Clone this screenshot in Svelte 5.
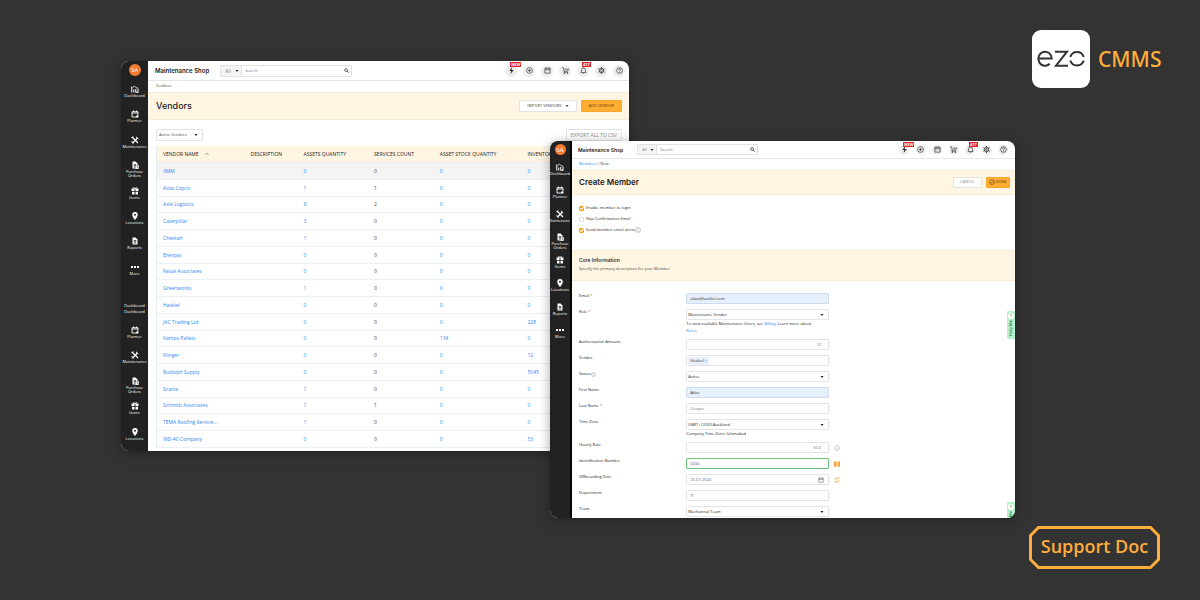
<script lang="ts">
	interface Field {
		id: string;
		label: string;
		kind?: 'select' | 'chip' | 'date';
		value: string;
		required?: boolean;
		info?: boolean;
		filled?: boolean;
		numeric?: boolean;
		valid?: boolean;
		side?: string;
	}

	const menu = [
		{ icon: 'dashboard', label: 'Dashboard' },
		{ icon: 'planner', label: 'Planner' },
		{ icon: 'tools', label: 'Maintenance' },
		{ icon: 'order', label: 'Purchase Orders' },
		{ icon: 'items', label: 'Items' },
		{ icon: 'pin', label: 'Locations' },
		{ icon: 'report', label: 'Reports' },
		{ icon: 'more', label: 'More' }
	];
	const actions = [
		{ icon: 'bolt', label: 'Updates', badge: 'NEW' },
		{ icon: 'plus', label: 'Add' },
		{ icon: 'calendar', label: 'Calendar' },
		{ icon: 'cart', label: 'Cart' },
		{ icon: 'bell', label: 'Alerts', badge: '417' },
		{ icon: 'gear', label: 'Settings' },
		{ icon: 'help', label: 'Help' }
	];

	const columns = ['Description', 'Assets Quantity', 'Services Count', 'Asset Stock Quantity', 'Inventory'];
	// name, assets, services, stock, inventory
	const vendors: [string, number, number, number, number][] = [
		['3MM', 0, 0, 0, 0],
		['Atlas Copco', 1, 1, 0, 0],
		['Axle Logistics', 9, 2, 0, 0],
		['Caterpillar', 3, 0, 0, 0],
		['Cheetah', 1, 0, 0, 0],
		['Enerpac', 0, 0, 0, 0],
		['Faisal Associates', 0, 0, 0, 0],
		['Greenworks', 1, 0, 0, 0],
		['Haskiel', 0, 0, 0, 0],
		['JAC Trading Ltd', 0, 0, 0, 228],
		['Kamps Pallets', 0, 0, 134, 0],
		['Klinger', 0, 0, 0, 12],
		['Rudolph Supply', 0, 0, 0, 5045],
		['Scania', 1, 0, 0, 0],
		['Schmidt Associates', 1, 1, 0, 0],
		['TEMA Roofing Service...', 1, 0, 0, 0],
		['WD-40 Company', 0, 0, 0, 53]
	];

	const fields: Field[] = [
		{ id: 'email', label: 'Email', value: 'atlas@hasklel.com', required: true, filled: true },
		{ id: 'role', label: 'Role', kind: 'select', value: 'Maintenance Vendor', required: true },
		{ id: 'amount', label: 'Authorization Amount', value: '10', numeric: true },
		{ id: 'vendor', label: 'Vendor', kind: 'chip', value: 'Haskiel' },
		{ id: 'status', label: 'Status', kind: 'select', value: 'Active', info: true },
		{ id: 'first', label: 'First Name', value: 'Atlas', filled: true },
		{ id: 'last', label: 'Last Name', value: 'Cooper', required: true },
		{ id: 'zone', label: 'Time Zone', kind: 'select', value: '(GMT+12:00) Auckland' },
		{ id: 'rate', label: 'Hourly Rate', value: '50.0', numeric: true, side: 'info' },
		{ id: 'ident', label: 'Identification Number', value: '6434', valid: true, side: 'barcode' },
		{ id: 'offboard', label: 'Offboarding Date', kind: 'date', value: '25-07-2024', side: 'refresh' },
		{ id: 'dept', label: 'Department', value: 'IT' },
		{ id: 'team', label: 'Team', kind: 'select', value: 'Mechanical Team' }
	];
</script>

{#snippet icon(name: string)}
	<svg class="icon" viewBox="0 0 16 16" aria-hidden="true">
		{#if name === 'dashboard'}
			<path d="M1.500 3v12M5.500 15V9M9.500 15V8M14 15V8M9.500 14.500h5" stroke-width="2" /><path d="M3 5l4-3 3 3.500 5 1" />
		{:else if name === 'planner'}
			<path d="M2 3.500h12v7M2 3.500V14h8M2 6h12M5 1v3M11 1v3" stroke-width="1.800" /><circle class="solid" cx="12.500" cy="13" r="2.500" />
		{:else if name === 'tools'}
			<path d="M3 14L12.500 4.500M2 2l12 12" stroke-width="2.600" /><path d="M11 1.500a4 4 0 0 0 3.500 4M1.500 10.500a4 4 0 0 0 3.500 4M1 4l3-3" stroke-width="2" />
		{:else if name === 'order' || name === 'report'}
			<path class="solid" d="M3 1h6l4 4v10H3z" /><path class="cut" d="M5.500 7h5M5.500 9.500h5M5.500 12h5" />
			{#if name === 'order'}<path d="M14.500 8v7.500H9" stroke-width="2" />{/if}
		{:else if name === 'items'}
			<path class="solid" d="M1 3h6v5H1zM9 3h6v5H9zM2 9.500h5V15H2zM9 9.500h5V15H9z" /><path d="M8 4C4 3 4 1 5.500 1S8 3 8 4c0-1 1-3 2.500-3S12 3 8 4z" />
		{:else if name === 'pin'}
			<path class="solid" fill-rule="evenodd" d="M8 0a5.500 5.500 0 0 0-5.500 5.500C2.500 10 8 16 8 16s5.500-6 5.500-10.500A5.500 5.500 0 0 0 8 0zm0 3.500a2 2 0 1 1 0 4 2 2 0 0 1 0-4z" />
		{:else if name === 'more'}
			<path class="solid" d="M0 6h4v4H0zM6 6h4v4H6zM12 6h4v4h-4z" />
		{:else if name === 'bolt'}
			<path class="solid" d="M9.500 0L3 9h4l-1 7 7-9H8.500z" />
		{:else if name === 'plus'}
			<circle cx="8" cy="8" r="6.500" /><path d="M8 4.500v7M4.500 8h7" />
		{:else if name === 'calendar'}
			<path d="M2 3h12v11H2zM2 6.500h12M5 1v3M11 1v3" />
		{:else if name === 'cart'}
			<path d="M0 1.500h3l2 8h8l2-6M5 9.500L4 12h10M6 5h8" /><circle class="solid" cx="5.500" cy="14" r="1.500" /><circle class="solid" cx="12.500" cy="14" r="1.500" />
		{:else if name === 'bell'}
			<path d="M2 12.500h12L12.500 10V7a4.500 4.500 0 0 0-9 0v3zM6.500 14.500h3M8 1v1.500" />
		{:else if name === 'gear'}
			<circle cx="8" cy="8" r="5" stroke-width="2" /><circle cx="8" cy="8" r="2" /><path d="M8 0v3M8 13v3M1 4l2.500 1.500M12.500 10.500L15 12M1 12l2.500-1.500M12.500 5.500L15 4" stroke-width="2" />
		{:else if name === 'help'}
			<circle cx="8" cy="8" r="6.500" /><path d="M5.800 6.500a2.200 2.200 0 1 1 3.200 2q-1 .5-1 1.500M8 11v1.500" />
		{:else if name === 'info'}
			<circle cx="8" cy="8" r="6.500" /><path d="M8 7v5M8 4v1.500" />
		{:else if name === 'search'}
			<circle cx="6.500" cy="6.500" r="4.500" stroke-width="2" /><path d="M10 10l5 5" stroke-width="2.500" />
		{:else if name === 'check'}
			<circle cx="8" cy="8" r="6.500" /><path d="M5 8l2.500 2.500L12 5.500" />
		{:else if name === 'barcode'}
			<path class="solid" d="M0 1h5v14H0zM6.500 1h3v14h-3zM11 1h5v14h-5z" />
		{:else if name === 'refresh'}
			<path d="M3 9V6a3 3 0 0 1 3-3h6M13 7v3a3 3 0 0 1-3 3H4M10 .5L13 3l-3 2.500M6 10.500L3 13l3 2.500" stroke-width="2" />
		{:else if name === 'caret'}
			<path class="solid" d="M2 4h12l-6 8z" />
		{:else if name === 'sort'}
			<path d="M2 11l6-6 6 6" stroke-width="2" />
		{/if}
	</svg>
{/snippet}

{#snippet menuList(entries: typeof menu)}
	<ul class="menu">
		{#each entries as entry}
			<li><a href="#{entry.icon}">{@render icon(entry.icon)}<span>{entry.label}</span></a></li>
		{/each}
	</ul>
{/snippet}

{#snippet topbar(id: string)}
	<header class="topbar">
		<strong class="shop">Maintenance Shop</strong>
		<form class="search" role="search">
			<span class="scope">
				<select aria-label="Search in"><option>All</option></select>
				{@render icon('caret')}
			</span>
			<input {id} type="search" placeholder="Search" aria-label="Search" />
			<button type="button" aria-label="Run search">{@render icon('search')}</button>
		</form>
		<div class="actions">
			{#each actions as action}
				<button type="button" aria-label={action.label}>
					{@render icon(action.icon)}
					{#if action.badge}<span class="badge">{action.badge}</span>{/if}
				</button>
			{/each}
		</div>
	</header>
{/snippet}

<main class="stage">
	<section class="window vendors" aria-label="Vendors">
		<nav class="sidebar" aria-label="Vendors menu">
			<span class="avatar">SA</span>
			{@render menuList(menu)}
			<div class="repeat"><span>Dashboard</span><span>Dashboard</span></div>
			{@render menuList(menu.slice(1, 6))}
		</nav>
		<div class="content">
			{@render topbar('search-vendors')}
			<div class="crumbs">Vendors</div>
			<div class="titlebar">
				<h1>Vendors</h1>
				<button type="button" class="btn">IMPORT VENDORS {@render icon('caret')}</button>
				<button type="button" class="btn primary">ADD VENDOR</button>
			</div>
			<div class="tools">
				<span class="filter">
					<select aria-label="Vendor filter"><option>Active Vendors</option></select>
					{@render icon('caret')}
				</span>
				<button type="button" class="btn quiet">EXPORT ALL TO CSV</button>
			</div>
			<table>
				<thead>
					<tr>
						<th class="name">Vendor Name {@render icon('sort')}</th>
						{#each columns as column}<th>{column}</th>{/each}
					</tr>
				</thead>
				<tbody>
					{#each vendors as [name, assets, services, stock, inventory]}
						<tr>
							<td><a href="#vendor">{name}</a></td>
							<td></td>
							<td><a href="#assets">{assets}</a></td>
							<td>{services}</td>
							<td><a href="#stock">{stock}</a></td>
							<td><a href="#inventory">{inventory}</a></td>
						</tr>
					{/each}
				</tbody>
			</table>
		</div>
	</section>

	<section class="window member" aria-label="Create Member">
		<nav class="sidebar" aria-label="Member menu">
			<span class="avatar">SA</span>
			{@render menuList(menu)}
		</nav>
		<div class="content">
			{@render topbar('search-members')}
			<div class="crumbs"><a href="#members">Members</a> / New</div>
			<div class="titlebar">
				<h1>Create Member</h1>
				<button type="button" class="btn quiet">CANCEL</button>
				<button type="button" class="btn primary">{@render icon('check')}DONE</button>
			</div>
			<div class="checks">
				<label><input type="checkbox" checked />Enable member to login</label>
				<label><input type="checkbox" />Skip Confirmation Email</label>
				<label><input type="checkbox" checked />Send member email alerts{@render icon('info')}</label>
			</div>
			<div class="core">
				<h2>Core Information</h2>
				<p>Specify the primary description for your Member</p>
			</div>
			<form class="fields">
				{#each fields as field}
					<div class="field">
						<label for={field.id}>
							{field.label}{#if field.required}<em>*</em>{/if}{#if field.info}{@render icon('info')}{/if}
						</label>
						<div class="value">
							<div class="box" class:filled={field.filled} class:valid={field.valid} class:picker={field.kind === 'select' || field.kind === 'chip'}>
								{#if field.kind === 'select'}
									<select id={field.id}><option>{field.value}</option></select>
									{@render icon('caret')}
								{:else if field.kind === 'chip'}
									<span class="chip">{field.value} <b>×</b></span>
									<input id={field.id} type="text" />
								{:else}
									<input id={field.id} type="text" value={field.value} class:numeric={field.numeric} />
									{#if field.kind === 'date'}{@render icon('calendar')}{/if}
								{/if}
							</div>
							{#if field.id === 'role'}
								<p>To view available Maintenance Users, see <a href="#billing">Billing</a>. Learn more about <a href="#roles">Roles</a>.</p>
							{:else if field.id === 'zone'}
								<p>Company Time Zone: Islamabad</p>
							{/if}
						</div>
						{#if field.side}<span class="side {field.side}">{@render icon(field.side)}</span>{/if}
					</div>
				{/each}
			</form>
		</div>
		<button type="button" class="help"><i>?</i><span>Help Me</span></button>
		<button type="button" class="help low"><i>?</i><span>Help Me</span></button>
	</section>

	<div class="brand">
		<svg viewBox="0 0 58 58" role="img" aria-label="ezo">
			<rect width="58" height="58" rx="9" fill="#fff" />
			<g fill="none" stroke="#333" stroke-width="2">
				<path d="M6.300 28.500h13.400a6.700 7 0 1 0-2 5.200" />
				<path d="M23 21.700h12L24 35.700h12" />
				<path d="M38.300 27a7 7 0 0 1 13.400 0M38.300 30.500a7 7 0 0 0 13.400 0" />
			</g>
		</svg>
		<span>CMMS</span>
	</div>

	<div class="tag">
		<svg viewBox="0 0 131 43" preserveAspectRatio="none" aria-hidden="true">
			<path d="M9.500 1.500h112l8 8v24l-8 8H9.500l-8-8v-24z" />
		</svg>
		<span>Support Doc</span>
	</div>
</main>

<style>
	:global(body) {
		margin: 0;
		background: #333;
	}
	.stage {
		display: grid;
		/* two overlapping windows, then the brand column */
		grid-template-columns: 121fr 429fr 79fr 386fr 185fr;
		grid-template-rows: 61fr 80fr 310fr 67fr 82fr;
		height: 100vh;
		overflow: hidden;
		background: #333;
		font-family: "Open Sans", sans-serif;
		font-size: 5px;
		line-height: 6px;
		color: #444;
	}
	h1, h2, p, ul {
		margin: 0;
		padding: 0;
	}
	a {
		color: #2f86f6;
		text-decoration: none;
	}
	button, input, select {
		margin: 0;
		padding: 0;
		border: 0;
		background: none;
		font: inherit;
		color: inherit;
		appearance: none;
		min-width: 0;
	}
	input::placeholder {
		color: #777;
	}
	.icon {
		width: 6px;
		height: 6px;
		flex: none;
		fill: none;
		stroke: currentColor;
		stroke-width: 1.5;
	}
	.icon .solid {
		fill: currentColor;
		stroke: none;
	}
	.icon .cut {
		stroke: #222;
	}

	/* Windows */
	.window {
		position: relative;
		display: flex;
		min-width: 0;
		min-height: 0;
		overflow: hidden;
		border-radius: 8px;
		background: #fff;
		box-shadow: 0 2px 12px rgba(0, 0, 0, 0.35);
	}
	.vendors {
		grid-column: 2 / 4;
		grid-row: 2 / 4;
	}
	.member {
		grid-column: 3 / 5;
		grid-row: 3 / 5;
	}
	.content {
		flex: 1;
		min-width: 0;
	}

	/* Sidebar */
	.sidebar {
		flex: none;
		width: 27px;
		overflow: hidden;
		background: #222;
		color: #fff;
		font-size: 4px;
		line-height: 4px;
		text-align: center;
	}
	.member .sidebar {
		width: 20px;
		border-right: 2px solid #050505;
	}
	.avatar {
		display: grid;
		place-items: center;
		width: 12px;
		height: 12px;
		margin: 3px auto 9px;
		border-radius: 50%;
		background: #f47b30;
		font-size: 6px;
	}
	.member .avatar {
		width: 11px;
		height: 11px;
		margin-bottom: 8px;
	}
	.menu {
		display: flex;
		flex-direction: column;
		height: 203px;
		list-style: none;
	}
	.member .menu {
		height: 186px;
	}
	.menu li {
		flex: 1;
	}
	.menu a {
		display: flex;
		flex-direction: column;
		align-items: center;
		color: #fff;
	}
	.menu .icon {
		width: 8px;
		height: 8px;
	}
	.menu span {
		padding-top: 1px;
	}
	.repeat {
		display: flex;
		flex-direction: column;
		gap: 2px;
		padding: 16px 0 12px;
	}
	.repeat + .menu {
		height: 127px;
	}

	/* Top bar */
	.topbar {
		display: flex;
		align-items: center;
		height: 19px;
		padding: 0 4px 0 7px;
		border-bottom: 1px solid #e6e6e6;
	}
	.member .topbar {
		height: 17px;
		padding: 0 7px 0 6px;
	}
	.shop {
		font-family: Inter, sans-serif;
		font-size: 6px;
		font-weight: 600;
		color: #222;
	}
	.member .shop {
		font-size: 5px;
	}
	.search {
		display: flex;
		align-items: center;
		box-sizing: border-box;
		width: 132px;
		height: 12px;
		margin-left: 11px;
		border: 1px solid #e2e2e2;
		border-radius: 1px;
		font-size: 4px;
	}
	.member .search {
		width: 121px;
		height: 11px;
		margin-left: 14px;
	}
	.scope {
		display: flex;
		align-items: center;
		gap: 4px;
		height: 100%;
		padding: 0 2px 0 4px;
		border-right: 1px solid #e2e2e2;
		background: #f4f4f4;
		font-size: 5px;
		color: #888;
	}
	.member .scope {
		gap: 3px;
		font-size: 4px;
	}
	.scope .icon, .filter .icon, .box .icon {
		width: 4px;
		height: 4px;
		color: #222;
	}
	.search input {
		flex: 1;
		padding-left: 3px;
	}
	.search button {
		display: flex;
		padding-right: 2px;
		color: #222;
	}
	.search button .icon {
		width: 5px;
		height: 5px;
	}
	.actions {
		display: flex;
		justify-content: space-between;
		width: 120px;
		margin-left: auto;
	}
	.actions button {
		position: relative;
		display: grid;
		place-items: center;
		width: 12px;
		height: 12px;
		border-radius: 50%;
		background: #ededed;
		color: #333;
	}
	.member .actions {
		width: 109px;
	}
	.member .actions button {
		width: 10px;
		height: 10px;
	}
	.actions .icon {
		width: 7px;
		height: 7px;
	}
	.badge {
		position: absolute;
		top: -3px;
		left: 5px;
		padding: 0 1px;
		background: #e0222b;
		color: #fff;
		font-size: 4px;
		font-weight: 700;
		line-height: 5px;
	}
	.member .badge {
		left: 4px;
	}

	.crumbs {
		height: 11px;
		padding-left: 8px;
		line-height: 10px;
		font-size: 4px;
	}
	.member .crumbs {
		padding-left: 7px;
	}
	.titlebar {
		display: flex;
		align-items: center;
		gap: 4px;
		box-sizing: border-box;
		height: 28px;
		padding: 0 7px 1px 8px;
		border: solid #f8ecd4;
		border-width: 1px 0;
		background: #fff5e3;
	}
	.member .titlebar {
		height: 25px;
		padding: 0 5px 1px 7px;
	}
	h1 {
		margin-right: auto;
		font-family: Inter, sans-serif;
		font-size: 9px;
		font-weight: 500;
		line-height: 12px;
		color: #222;
	}
	.member h1 {
		font-size: 8px;
		font-weight: 600;
	}
	.btn {
		display: flex;
		align-items: center;
		justify-content: center;
		gap: 3px;
		box-sizing: border-box;
		height: 12px;
		padding: 0 7px;
		border: 1px solid #e2e2e2;
		border-radius: 1px;
		background: #fff;
		font-size: 4px;
		white-space: nowrap;
	}
	.btn .icon {
		width: 4px;
		height: 4px;
	}
	.btn.quiet {
		color: #888;
	}
	.btn.primary {
		border-color: #f7a62d;
		background: #ffad33;
		color: #5a3c0c;
	}
	.member .btn {
		height: 11px;
		padding: 0 6px;
	}
	.member .btn.primary {
		gap: 1px;
		padding: 0 2px;
	}
	.member .btn.primary .icon {
		width: 6px;
		height: 6px;
	}

	/* Vendor list */
	.tools {
		display: flex;
		justify-content: space-between;
		padding: 9px 7px 5px 8px;
	}
	.tools .btn {
		padding: 0 4px;
		font-size: 5px;
	}
	.filter {
		display: flex;
		align-items: center;
		gap: 7px;
		box-sizing: border-box;
		height: 12px;
		padding: 0 4px 0 2px;
		border: 1px solid #e2e2e2;
		border-radius: 1px;
		font-size: 4px;
	}
	table {
		width: calc(100% - 15px);
		margin-left: 8px;
		border-collapse: collapse;
		table-layout: fixed;
		border-left: 1px solid #e3ebf3;
		height: 302px;
	}
	th, td {
		padding: 0 0 0 6px;
		text-align: left;
		white-space: nowrap;
		border-bottom: 1px solid #e9f0f6;
	}
	th {
		width: 15%;
		height: 16px;
		background: #fff5e3;
		font-weight: 400;
		text-transform: uppercase;
		color: #222;
	}
	th .icon {
		width: 4px;
		height: 4px;
		margin-left: 5px;
	}
	th.name {
		width: 19%;
	}
	th:nth-child(2) {
		width: 11%;
	}
	th:nth-child(4) {
		width: 14%;
	}
	th:nth-child(5) {
		width: 19%;
	}
	th:nth-child(6) {
		width: 22%;
	}
	tbody tr:first-child {
		background: #f4f4f4;
	}

	/* Member form */
	.checks {
		display: flex;
		flex-direction: column;
		align-items: flex-start;
		gap: 5px;
		padding: 10px 7px 17px;
		font-size: 4px;
	}
	.checks label {
		display: flex;
		align-items: center;
		color: #222;
	}
	.checks input {
		display: grid;
		place-items: center;
		box-sizing: border-box;
		width: 5px;
		height: 5px;
		margin-right: 2px;
		border: 1px solid #ddd;
		border-radius: 1px;
	}
	.checks input:checked {
		border-color: #f9a01b;
		background: #f9a01b;
	}
	.checks input:checked::after {
		content: "";
		width: 3px;
		height: 1px;
		border: solid #fff;
		border-width: 0 0 1px 1px;
		transform: rotate(-45deg);
	}
	.checks .icon {
		color: #999;
	}
	.core {
		padding: 6px 7px 8px;
		border: solid #f8ecd4;
		border-width: 1px 0;
		background: #fff5e3;
	}
	h2 {
		margin-bottom: 3px;
		font-family: Inter, sans-serif;
		font-size: 5px;
		font-weight: 600;
		line-height: 6px;
		color: #333;
	}
	.core p {
		font-size: 4px;
		line-height: 6px;
	}
	.fields {
		display: flex;
		flex-direction: column;
		gap: 5px;
		padding: 12px 7px 0;
		font-size: 4px;
		color: #222;
	}
	.field {
		display: grid;
		grid-template-columns: 25% 143px 6px;
		align-items: start;
	}
	.field label {
		display: flex;
		align-items: center;
		line-height: 6px;
	}
	.field label .icon {
		width: 5px;
		height: 5px;
		color: #999;
	}
	em {
		margin-left: 1px;
		color: #e33;
		font-style: normal;
	}
	.box {
		display: flex;
		align-items: center;
		box-sizing: border-box;
		height: 11px;
		padding: 0 4px 0 3px;
		border: 1px solid #e2e4e8;
		border-radius: 1px;
		color: #667;
	}
	.box.picker {
		padding-left: 1px;
		color: #222;
	}
	.box.filled {
		border-color: #cfdcf0;
		background: #e6effc;
		color: #222;
	}
	.box.valid {
		border-color: #6dc47a;
	}
	.box input, .box select {
		flex: 1;
		height: 9px;
	}
	.box .numeric {
		padding-right: 3px;
		text-align: right;
	}
	.box .icon:last-child {
		margin-left: auto;
	}
	.box input + .icon:last-child {
		width: 6px;
		height: 6px;
		color: #666;
	}
	.chip {
		padding: 0 2px;
		border-radius: 1px;
		background: #eaf0f9;
		line-height: 8px;
	}
	.chip b {
		color: #2f86f6;
		font-weight: 400;
	}
	.value p {
		padding-right: 10px;
		line-height: 7px;
	}
	.side {
		display: flex;
		padding: 3px 0 0 5px;
		color: #f9a030;
	}
	.side .icon {
		width: 6px;
		height: 6px;
	}
	.side.info {
		color: #aaa;
	}

	/* Help tabs on the window edge */
	.help {
		position: absolute;
		top: 45%;
		right: 0;
		display: flex;
		flex-direction: column;
		align-items: center;
		gap: 1px;
		width: 8px;
		height: 28px;
		padding-top: 2px;
		overflow: hidden;
		border-radius: 1px 0 0 1px;
		background: #b9f0d0;
		color: #15803d;
		font-size: 4px;
		font-weight: 600;
	}
	.help.low {
		top: auto;
		bottom: -12px;
	}
	.help i {
		width: 6px;
		border-radius: 50%;
		background: #fff;
		font-style: normal;
		text-align: center;
	}
	.help span {
		writing-mode: vertical-rl;
		rotate: 180deg;
	}

	/* Brand and tag */
	.brand {
		grid-column: 5;
		grid-row: 1 / 3;
		display: flex;
		align-items: center;
		align-self: start;
		gap: 8px;
		padding: 30px 0 0 17px;
		font-family: "Noto Sans", sans-serif;
		font-size: 21px;
		font-weight: 500;
		line-height: 30px;
		color: #ffad3b;
	}
	.brand svg {
		width: 58px;
		height: 58px;
		flex: none;
	}
	.tag {
		grid-column: 5;
		grid-row: 4 / 6;
		position: relative;
		display: grid;
		place-items: center;
		place-self: end start;
		box-sizing: border-box;
		width: 131px;
		height: 43px;
		margin: 0 0 31px 14px;
		padding-bottom: 3px;
		font-size: 18px;
		font-weight: 600;
		line-height: 24px;
		color: #ffad3b;
	}
	.tag svg {
		position: absolute;
		inset: 0;
		width: 100%;
		height: 100%;
		fill: none;
		stroke: #ffad3b;
		stroke-width: 3;
	}
</style>
